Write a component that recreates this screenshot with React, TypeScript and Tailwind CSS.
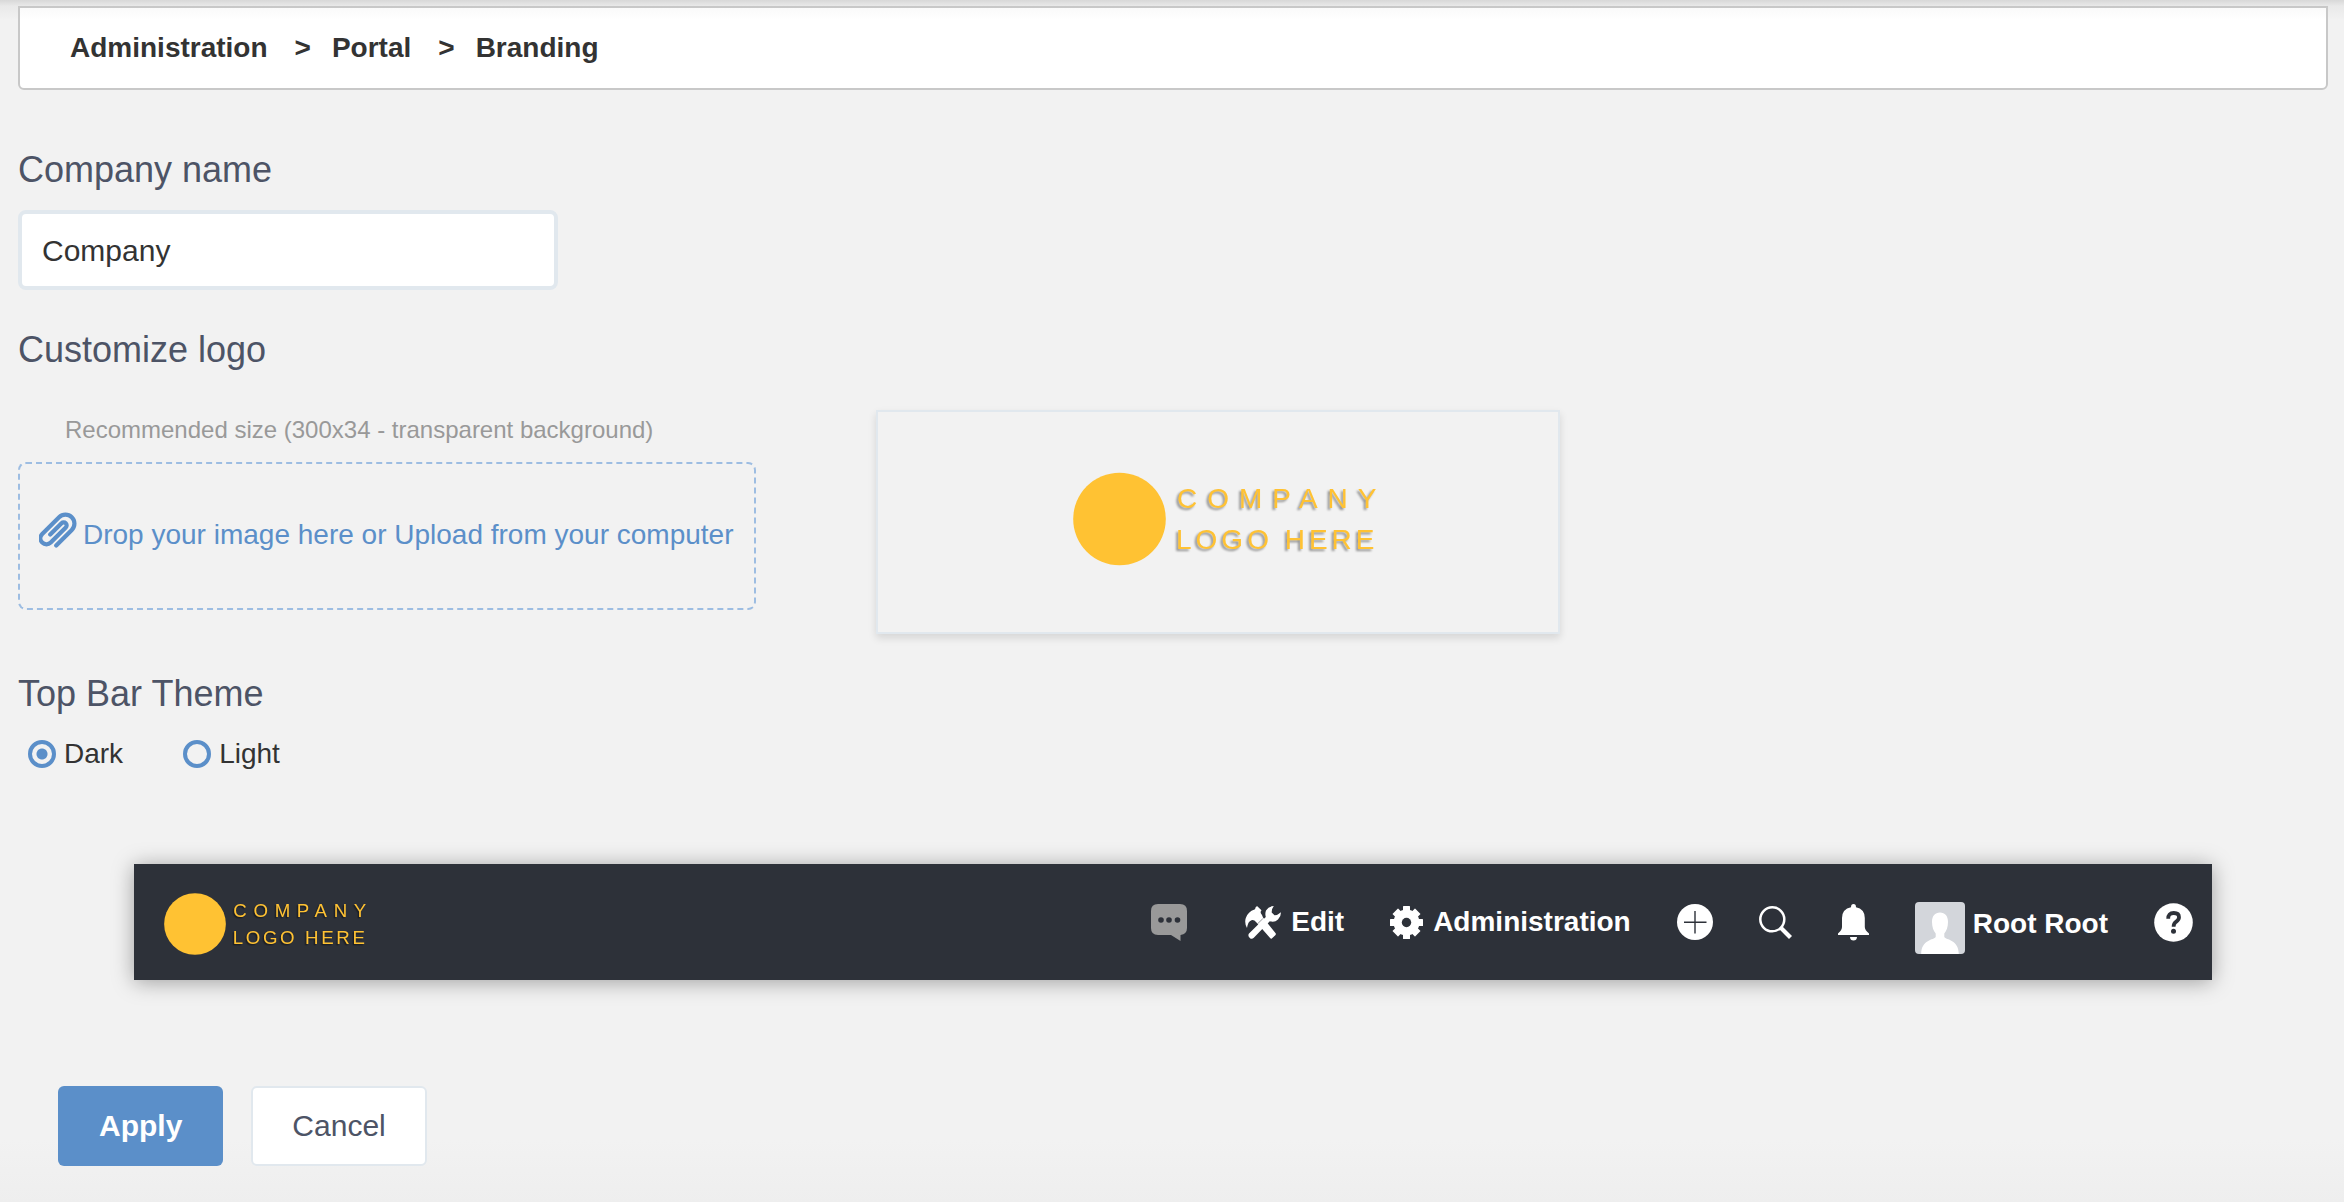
import { useState } from "react";

function CompanyLogo({ className, textClassName }: { className: string; textClassName: string }) {
  return (
    <svg viewBox="0 0 324 96" className={className} role="img" aria-label="Company logo here">
      <circle cx="46.500" cy="48" r="46.300" fill="#ffc233" />
      <g fill="#ffc233" fontSize="28" className={textClassName}>
        <text x="104" y="37" className="tracking-[10px]">COMPANY</text>
        <text x="103" y="78" className="tracking-[4px]">LOGO HERE</text>
      </g>
    </svg>
  );
}

function PaperclipIcon() {
  return (
    <svg viewBox="-19 -19 38 38" className="mb-2 size-[38px] shrink-0" fill="none" stroke="#5b8fc9" strokeWidth="4.200" strokeLinecap="round" aria-hidden="true">
      <path
        transform="rotate(45)"
        d="M9 11.500V-10.500A9 9 0 0 0-9-10.500V13.300A6 6 0 0 0 3 13.300V-8A3 3 0 0 0-3-8V8"
      />
    </svg>
  );
}

function ChatIcon() {
  return (
    <svg viewBox="0 0 36 37" className="h-[37px] w-9" aria-hidden="true">
      <path fill="#999" d="M7 0H29Q36 0 36 7V24Q36 30 29.500 31V37L20 31H7Q0 31 0 24V7Q0 0 7 0Z" />
      <g fill="#2d3139">
        <circle cx="10" cy="16" r="2.800" />
        <circle cx="18" cy="16" r="2.800" />
        <circle cx="26.500" cy="16" r="2.800" />
      </g>
    </svg>
  );
}

function ToolsIcon() {
  return (
    <svg viewBox="0 0 36 33" className="h-[33px] w-9" fill="#fff" aria-hidden="true">
      <path d="M12 0L16.500 4.200Q14.500 6.500 17 9L18 11.500L30.800 27.600Q31 28.500 30.300 29.200L26.800 32.500Q26 33 25.300 32.300L11.500 16.500Q9 13.500 6.500 14.200Q2.800 15.500 2 22Q-0.800 17 0.800 12Q3 5.500 9.500 3.500Q10.500 2.800 10.300 1.800Z" />
      <path d="M28.800 0Q23.500 0.300 21 4.500Q19.800 7.500 20.800 11L4 27.500Q2.800 29 4 31L5 32.200Q7 33.500 8.800 31.800L24.800 15.200Q29.500 16.800 33 13.500Q36 10.500 36 6.200Q32.500 9.300 29.500 9.200L26.700 6.500Q26.500 3 28.800 0Z" />
      <path d="M12.500 17.800L17.800 12.700" stroke="#2d3139" strokeWidth="0.500" />
    </svg>
  );
}

function GearIcon() {
  return (
    <svg viewBox="-16.500 -16.500 33 33" className="size-[33px]" fill="#fff" aria-hidden="true">
      {[0, 90].map((angle) => (
        <rect key={angle} x="-3.500" y="-16.500" width="7" height="33" rx="0.500" transform={`rotate(${angle})`} />
      ))}
      {[45, 135].map((angle) => (
        <rect key={angle} x="-4" y="-16" width="8" height="32" rx="0.500" transform={`rotate(${angle})`} />
      ))}
      <circle r="13" />
      <circle r="4.700" fill="#2d3139" />
    </svg>
  );
}

function PlusIcon() {
  return (
    <svg viewBox="0 0 36 36" className="size-9" aria-hidden="true">
      <circle cx="18" cy="18" r="18" fill="#fff" />
      <path d="M18 7V29.500M7 18.300H29.500" stroke="#2d3139" strokeWidth="1.400" />
    </svg>
  );
}

function SearchIcon() {
  return (
    <svg viewBox="0 0 33 33" className="size-[33px]" fill="none" stroke="#fff" aria-hidden="true">
      <circle cx="13.300" cy="13.300" r="12" strokeWidth="2.500" />
      <path d="M21.300 21.300L31.500 31.500" strokeWidth="4.200" />
    </svg>
  );
}

function BellIcon() {
  return (
    <svg viewBox="0 0 31 37" className="h-[37px] w-[31px]" fill="#fff" aria-hidden="true">
      <path d="M15.500 0Q18 0 18 3.200Q26.800 5 26.800 14V23Q26.800 26 31 29.500V31H0V29.500Q4 26 4 23V14Q4 5 13 3.200Q13 0 15.500 0Z" />
      <path d="M12 33H19Q18.800 36.500 15.500 36.500Q12.200 36.500 12 33Z" />
    </svg>
  );
}

function Avatar() {
  return (
    <svg viewBox="0 0 50 52" className="h-[52px] w-[50px] rounded" aria-hidden="true">
      <rect width="50" height="52" fill="#d3d6db" />
      <path
        fill="#fff"
        d="M25 10.500C30 10.500 33 14 33 20C33 25 31.500 29 29.300 31.500V35C31 38 43.800 37.500 43.800 52H6.200C6.200 37.500 19 38 20.700 35V31.500C18.500 29 17 25 17 20C17 14 20 10.500 25 10.500Z"
      />
    </svg>
  );
}

function HelpIcon() {
  return (
    <svg viewBox="0 0 39 39" className="size-[39px]" aria-hidden="true">
      <circle cx="19.500" cy="19.500" r="19.300" fill="#fff" />
      <path d="M14.200 15.800Q14 10 19.800 10Q25 10 25 14.300Q25 16.800 22 18.800Q19.600 20.500 19.600 23.800" fill="none" stroke="#2d3139" strokeWidth="3.800" />
      <circle cx="19.500" cy="28.200" r="2.500" fill="#2d3139" />
    </svg>
  );
}

function SectionTitle({ children }: { children: string }) {
  return <h2 className="text-[36px] leading-10 text-[#4d5466]">{children}</h2>;
}

function ThemeOption({ label, checked, onSelect }: { label: string; checked: boolean; onSelect: () => void }) {
  return (
    <label className="flex h-7 items-center gap-2 text-[28px] leading-7">
      <input
        type="radio"
        name="theme"
        checked={checked}
        onChange={onSelect}
        className="size-7 appearance-none rounded-full border-4 border-[#5b8fc9] bg-origin-border checked:bg-[radial-gradient(circle,#5b8fc9_5px,transparent_6px)]"
      />
      {label}
    </label>
  );
}

export default function App() {
  const [name, setName] = useState("Company");
  const [theme, setTheme] = useState("Dark");

  return (
    <main className="min-h-screen bg-[#f2f2f2] bg-[linear-gradient(#d8d8d8,#e9e9e9_6px,#f2f2f2_20px,#f2f2f2_1140px,#eeeeee_1202px)] pt-[6px] pr-4 pb-9 pl-[18px] font-['Liberation_Sans',Arial,sans-serif] text-[#333]">
      <nav aria-label="Breadcrumb" className="rounded-b-md border-2 border-[#c8c8c8] bg-white bg-[linear-gradient(#fafafa,#ffffff_12px)] px-[50px] py-5">
        <ol className="flex text-[28px] leading-10 font-bold">
          <li><a href="#administration">Administration</a></li>
          <li className="before:mr-[21px] before:ml-[27px] before:content-['>']"><a href="#portal">Portal</a></li>
          <li className="before:mr-[21px] before:ml-[27px] before:content-['>']"><a href="#branding">Branding</a></li>
        </ol>
      </nav>

      <section className="mt-[60px]">
        <label htmlFor="company" className="block text-[36px] leading-10 text-[#4d5466]">Company name</label>
        <input
          id="company"
          value={name}
          onChange={(e) => setName(e.target.value)}
          className="mt-5 block h-20 w-[540px] rounded-lg border-4 border-[#e1e8ee] bg-white px-5 pt-[2px] text-[30px] outline-none"
        />
      </section>

      <section className="mt-10">
        <SectionTitle>Customize logo</SectionTitle>
        <div className="mt-10 flex items-start gap-[120px]">
          <div className="w-[738px] pt-1">
            <p className="px-[47px] text-[24px] leading-8 whitespace-nowrap text-[#999]">Recommended size (300x34 - transparent background)</p>
            <button type="button" className="mt-4 flex h-[148px] w-full items-center gap-[6px] rounded-lg border-2 border-dashed border-[#9dbde2] px-[19px] pb-[2px] text-[28px] leading-8 whitespace-nowrap text-[#5b8fc9]">
              <PaperclipIcon />
              Drop your image here or Upload from your computer
            </button>
          </div>
          <div className="flex h-56 w-[684px] items-center border-2 border-[#e1e8ee] pb-[6px] pl-[195px] shadow-[0_4px_8px_rgba(0,0,0,0.12)]">
            <CompanyLogo className="h-24" textClassName="[filter:drop-shadow(-2px_2px_1px_rgba(0,0,0,0.4))]" />
          </div>
        </div>
      </section>

      <section className="mt-10">
        <SectionTitle>Top Bar Theme</SectionTitle>
        <div className="mt-[26px] flex gap-[60px] pl-[10px]" role="radiogroup" aria-label="Top Bar Theme">
          {["Dark", "Light"].map((option) => (
            <ThemeOption key={option} label={option} checked={theme === option} onSelect={() => setTheme(option)} />
          ))}
        </div>
      </section>

      <header className="mx-[116px] mt-24 flex h-[116px] items-center justify-between bg-[#2d3139] pr-[19px] pl-[30px] text-[28px] leading-8 font-bold text-white shadow-[0_2px_20px_rgba(0,0,0,0.35)]">
        <CompanyLogo className="mt-1 h-16 font-normal" textClassName="[filter:drop-shadow(-2px_2px_1px_rgba(0,0,0,0.4))]" />
        <div className="flex items-center gap-[46px]">
          <button type="button" aria-label="Chat" className="mr-3"><ChatIcon /></button>
          <button type="button" className="flex items-center gap-[10px]"><ToolsIcon />Edit</button>
          <a href="#administration" className="flex items-center gap-[10px]"><GearIcon />Administration</a>
          <button type="button" aria-label="Create"><PlusIcon /></button>
          <button type="button" aria-label="Search"><SearchIcon /></button>
          <button type="button" aria-label="Notifications"><BellIcon /></button>
          <a href="#profile" className="mt-3 flex gap-2 leading-[44px]"><Avatar />Root Root</a>
          <button type="button" aria-label="Help"><HelpIcon /></button>
        </div>
      </header>

      <div className="mt-[106px] flex gap-7 pl-10 text-[30px]">
        <button type="button" className="h-20 rounded-md bg-[#5b8fc9] px-[41px] pb-[2px] font-bold text-white">Apply</button>
        <button type="button" className="h-20 rounded-md border-2 border-[#e1e8ee] bg-white px-[39px] pb-[2px] text-[#4d5466]">Cancel</button>
      </div>
    </main>
  );
}
